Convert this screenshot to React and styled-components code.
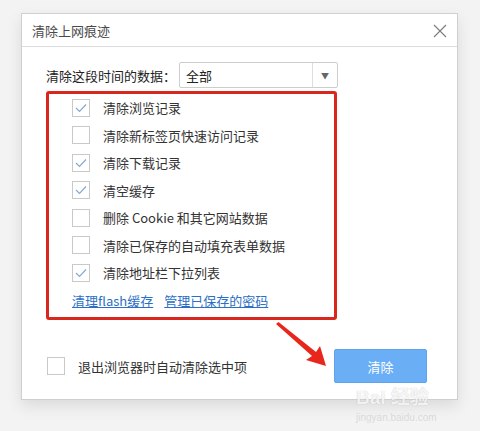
import React from "react";
import styled, { createGlobalStyle } from "styled-components";

const GlobalStyle = createGlobalStyle`
  html, body {
    margin: 0;
    padding: 0;
    background: #f3f3f3;
    font-family: "Noto Sans CJK SC", "Liberation Sans", sans-serif;
  }
`;

const Page = styled.div`
  position: relative;
  width: 480px;
  height: 431px;
  padding: 13px 0 0 21px;
  box-sizing: border-box;
  overflow: hidden;
`;

const Dialog = styled.div`
  width: 437px;
  height: 387px;
  box-sizing: border-box;
  background: #fff;
  border: 1px solid #cfcfcf;
  box-shadow: 0 6px 14px rgba(0, 0, 0, 0.1);
  display: flex;
  flex-direction: column;
`;

const TitleBar = styled.div`
  height: 32px;
  border-bottom: 1px solid #dcdcdc;
  display: flex;
  align-items: center;
  justify-content: space-between;
  padding: 0 10px 0 10px;
  font-size: 13px;
  color: #4a4a4a;
`;

const Close = styled.svg`
  width: 14px;
  height: 14px;
  margin-top: 2px;
`;

const Body = styled.div`
  padding: 15px 0 0 24px;
  display: flex;
  flex-direction: column;
  flex: 1;
`;

const RangeRow = styled.div`
  display: flex;
  align-items: center;
  font-size: 13px;
  color: #222;
`;

const Select = styled.div`
  margin-left: 3px;
  width: 159px;
  height: 26px;
  box-sizing: border-box;
  border: 1px solid #cdcdcd;
  border-radius: 2px;
  display: flex;
  align-items: center;
`;

const SelectValue = styled.span`
  flex: 1;
  padding-left: 6px;
  color: #222;
`;

const SelectArrow = styled.span`
  width: 24px;
  height: 100%;
  border-left: 1px solid #dedede;
  display: flex;
  align-items: center;
  justify-content: center;
  font-size: 8px;
  color: #666;
`;

const Highlight = styled.div`
  margin-top: 3px;
  width: 291px;
  box-sizing: border-box;
  border: 3px solid #d9271d;
  border-radius: 3px;
  padding: 0 0 3px 23px;
`;

const Row = styled.label`
  height: 27.5px;
  display: flex;
  align-items: center;
  font-size: 13px;
  color: #333;
`;

const Box = styled.span`
  width: 18px;
  height: 18px;
  box-sizing: border-box;
  border: 1px solid #c9c9c9;
  background: #fff;
  display: flex;
  align-items: center;
  justify-content: center;
  margin-right: ${props => props.gap || 13}px;
`;

const Links = styled.div`
  height: 27px;
  display: flex;
  align-items: center;
  gap: 11px;
  font-size: 13px;
`;

const Link = styled.a`
  color: #2b6fc6;
  text-decoration: underline;
  cursor: pointer;
`;

const Footer = styled.div`
  margin-top: auto;
  padding: 0 30px 16px 25px;
  display: flex;
  align-items: center;
  justify-content: space-between;
`;

const AutoClear = styled.label`
  display: flex;
  align-items: center;
  font-size: 13px;
  color: #333;
`;

const Button = styled.button`
  width: 93px;
  height: 34px;
  border: 1px solid #5ea3ee;
  border-radius: 2px;
  background: #6aaef5;
  color: #fff;
  font-family: inherit;
  font-size: 13px;
`;

const Arrow = styled.svg`
  position: absolute;
  left: 270px;
  top: 318px;
  width: 64px;
  height: 56px;
`;

const Watermark = styled.div`
  position: absolute;
  left: 356px;
  top: 388px;
  font-family: "Liberation Sans", "Noto Sans CJK SC", sans-serif;
  color: rgba(255, 255, 255, 0.85);
  text-shadow: 0 0 1px rgba(0, 0, 0, 0.25);
  line-height: 1;
`;

const WmBig = styled.div`
  font-size: 19px;
  font-weight: bold;
`;

const WmSmall = styled.div`
  margin-top: 6px;
  font-size: 10px;
  color: rgba(200, 200, 200, 0.6);
  text-shadow: none;
`;

const Check = () => (
  <svg width="12" height="10" viewBox="0 0 12 10">
    <path d="M1 5 L4.5 8.5 L11 1.5" fill="none" stroke="#86a9cf" strokeWidth="1.2" />
  </svg>
);

const items = [
  { text: "清除浏览记录", on: true },
  { text: "清除新标签页快速访问记录", on: false },
  { text: "清除下载记录", on: true },
  { text: "清空缓存", on: true },
  { text: "删除 Cookie 和其它网站数据", on: false },
  { text: "清除已保存的自动填充表单数据", on: false },
  { text: "清除地址栏下拉列表", on: true }
];

const App = () => (
  <Page>
    <GlobalStyle />
    <Dialog>
      <TitleBar>
        <span>清除上网痕迹</span>
        <Close viewBox="0 0 14 14">
          <path d="M1 1 L13 13 M13 1 L1 13" stroke="#7a7a7a" strokeWidth="1.1" />
        </Close>
      </TitleBar>
      <Body>
        <RangeRow>
          清除这段时间的数据：
          <Select>
            <SelectValue>全部</SelectValue>
            <SelectArrow>▼</SelectArrow>
          </Select>
        </RangeRow>
        <Highlight>
          {items.map(item => (
            <Row key={item.text}>
              <Box>{item.on && <Check />}</Box>
              {item.text}
            </Row>
          ))}
          <Links>
            <Link>清理flash缓存</Link>
            <Link>管理已保存的密码</Link>
          </Links>
        </Highlight>
      </Body>
      <Footer>
        <AutoClear>
          <Box gap={13} />
          退出浏览器时自动清除选中项
        </AutoClear>
        <Button>清除</Button>
      </Footer>
    </Dialog>
    <Arrow viewBox="0 0 64 56">
      <path d="M6 6 L8.5 4 L46 34 L50 28 L56 48 L36 42 L42 38 Z" fill="#e8261c" />
    </Arrow>
    <Watermark>
      <WmBig>Bai 经验</WmBig>
      <WmSmall>jingyan.baidu.com</WmSmall>
    </Watermark>
  </Page>
);

export default App;
